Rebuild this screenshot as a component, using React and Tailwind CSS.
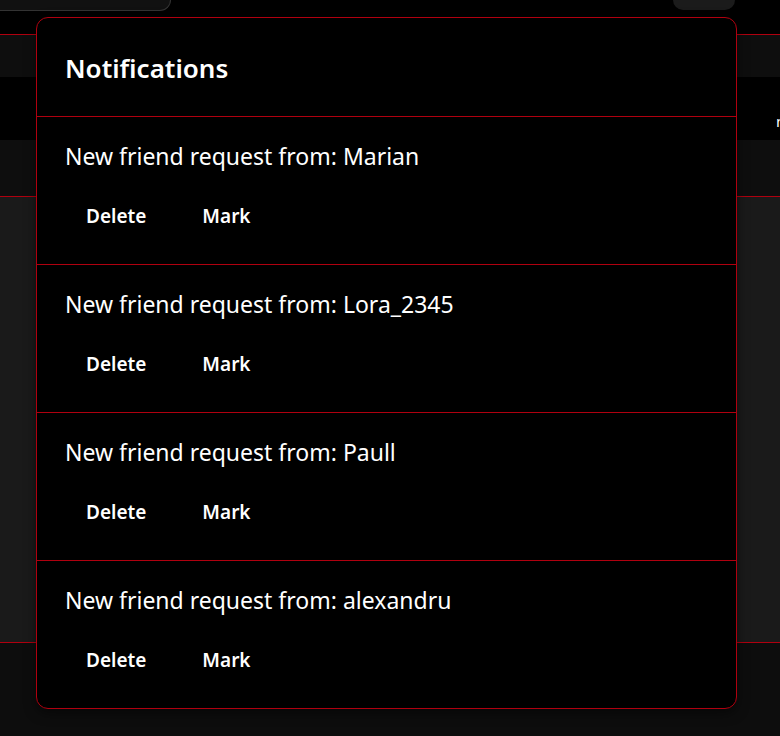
import React from "react";

const items = ["Marian", "Lora_2345", "Paull", "alexandru"];

export default function App() {
  return (
    <div className="relative w-[780px] h-[736px] overflow-hidden bg-[#0d0d0d] font-['Noto_Sans',sans-serif]">
      {/* background page */}
      <div className="flex flex-col">
        <div className="relative h-[34px] bg-black">
          <div className="absolute left-0 top-0 h-[11px] w-[171px] rounded-br-[12px] border-b border-r border-[#333] bg-[#111]" />
          <div className="absolute left-[673px] top-0 h-[10px] w-[62px] rounded-b-[10px] bg-[#1b1b1b]" />
        </div>
        <div className="h-px bg-[#b0000f]" />
        <div className="h-[42px] bg-[#0e0e0e]" />
        <div className="relative h-[63px] bg-black">
          <span className="absolute left-[776px] top-[34px] text-[15px] leading-[20px] text-white">n</span>
        </div>
        <div className="h-[56px] bg-[#0e0e0e]" />
        <div className="h-px bg-[#b0000f]" />
        <div className="h-[445px] bg-[#1a1a1a]" />
        <div className="h-px bg-[#b0000f]" />
        <div className="h-[93px] bg-[#0d0d0d]" />
      </div>

      {/* popup */}
      <div className="absolute left-[36px] top-[17px] w-[701px] h-[692px] rounded-[12px] border border-[#b0000f] bg-black text-white shadow-[0_4px_12px_rgba(0,0,0,0.5)] overflow-hidden">
        <div className="h-[99px] border-b border-[#b0000f] pl-[28px] pt-[32px]">
          <h2 className="text-[26px] font-semibold leading-[36px]">Notifications</h2>
        </div>
        {items.map((name, i) => (
          <div
            key={name}
            className={`h-[148px] pl-[28px] pt-[23px] ${i < items.length - 1 ? "border-b border-[#b0000f]" : ""}`}
          >
            <p className="text-[23px] leading-[32px]">New friend request from: {name}</p>
            <div className="mt-[31px] flex pl-[21px] gap-[56px]">
              <button className="text-[19px] font-semibold leading-[26px]">Delete</button>
              <button className="text-[19px] font-semibold leading-[26px]">Mark</button>
            </div>
          </div>
        ))}
      </div>
    </div>
  );
}
